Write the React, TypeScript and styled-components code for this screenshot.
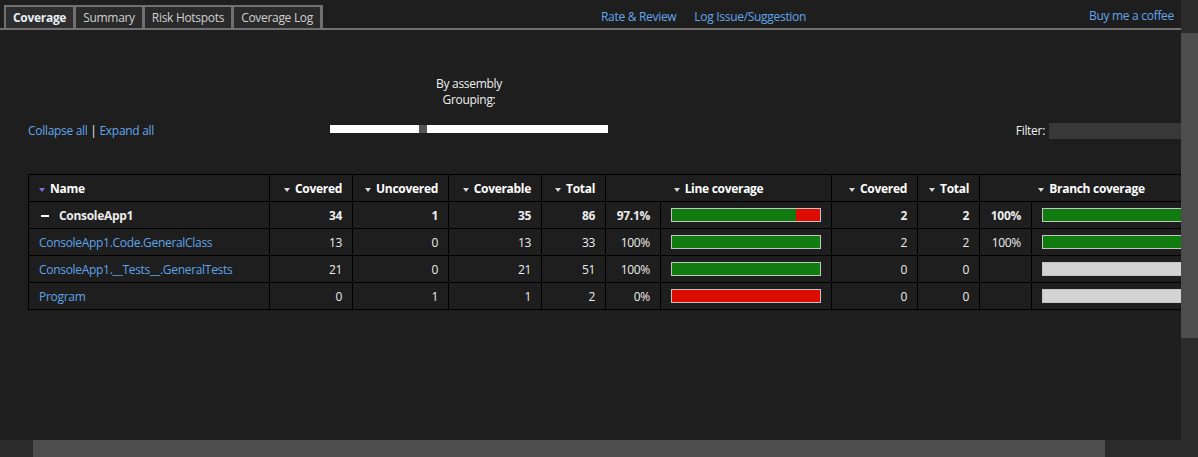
import React from 'react';
import styled, { createGlobalStyle } from 'styled-components';

const Global = createGlobalStyle`
  html, body { margin: 0; padding: 0; background: #1e1e1e; }
  body {
    font-family: "Open Sans", "Noto Sans", sans-serif;
    font-size: 12px;
    letter-spacing: -0.3px;
    color: #e6e6e6;
    overflow: hidden;
  }
`;

const Frame = styled.div`
  display: grid;
  grid-template-columns: 1181px 17px;
  grid-template-rows: 440px 17px;
  width: 1198px;
  height: 457px;
`;

const Viewport = styled.div`
  overflow: hidden;
  background: #1e1e1e;
`;

const Page = styled.div`
  width: 1240px;
`;

const Header = styled.header`
  display: flex;
  align-items: flex-end;
  box-sizing: border-box;
  width: 1181px;
  height: 30px;
  padding-left: 4px;
  border-bottom: 2px solid #707070;
`;

const TabBar = styled.nav`
  display: flex;
  align-items: flex-end;
`;

const Tab = styled.div<{ $active?: boolean }>`
  height: 21px;
  line-height: 21px;
  padding: 0 7px;
  border-top: 2px solid #707070;
  border-left: 2px solid #707070;
  border-right: 1px solid #707070;
  background: ${(p) => (p.$active ? '#2e2e2e' : '#2a2a2a')};
  color: ${(p) => (p.$active ? '#e8eef5' : '#d0d0d0')};
  font-weight: ${(p) => (p.$active ? 700 : 400)};
  white-space: nowrap;
  &:last-child { border-right-width: 3px; }
`;

const Links = styled.div`
  display: flex;
  align-items: center;
  gap: 18px;
  height: 28px;
  padding-top: 4px;
  box-sizing: border-box;
  align-self: flex-start;
  margin-left: 278px;
`;

const HeaderLink = styled.a`
  color: #62a6ec;
  text-decoration: none;
  white-space: nowrap;
`;

const Coffee = styled(HeaderLink)`
  margin-left: auto;
  margin-right: 7px;
  align-self: flex-start;
  line-height: 28px;
  padding-top: 2px;
`;

const Main = styled.main`
  padding: 46px 0 0 28px;
`;

const Controls = styled.div`
  display: grid;
  grid-template-columns: 302px 278px 1fr;
  align-items: end;
  width: 1175px;
`;

const Toggles = styled.div`
  line-height: 16px;
  color: #f0f0f0;
`;

const TextLink = styled.a`
  color: #62a6ec;
  text-decoration: none;
`;

const Grouping = styled.div`
  display: flex;
  flex-direction: column;
  align-items: center;
  padding-bottom: 6px;
  line-height: 16px;
  color: #f0f0f0;
`;

const Slider = styled.div`
  display: flex;
  align-self: stretch;
  height: 8px;
  margin-top: 17px;
`;

const SliderTrack = styled.div<{ $grow?: boolean; $w?: number }>`
  background: #ffffff;
  ${(p) => (p.$grow ? 'flex: 1;' : `width: ${p.$w}px;`)}
`;

const SliderThumb = styled.div`
  width: 8px;
  background: #555555;
`;

const FilterBox = styled.label`
  display: flex;
  justify-content: flex-end;
  align-items: center;
  gap: 4px;
  color: #f0f0f0;
`;

const FilterInput = styled.input`
  width: 154px;
  height: 16px;
  box-sizing: border-box;
  border: none;
  background: #383838;
  color: #fff;
  padding: 0 4px;
  font: inherit;
  outline: none;
`;

const Table = styled.table`
  margin-top: 35px;
  border-collapse: collapse;
  table-layout: fixed;
  width: 1175px;
  border: 1px solid #000;
`;

const Th = styled.th<{ $align?: string }>`
  height: 26px;
  padding: 0 10px;
  border: 1px solid #000;
  font-weight: 700;
  color: #ffffff;
  text-align: ${(p) => p.$align || 'right'};
  white-space: nowrap;
`;

const Td = styled.td<{ $align?: string; $bold?: boolean; $link?: boolean }>`
  height: 26px;
  padding: 0 10px;
  border: 1px solid #000;
  text-align: ${(p) => p.$align || 'right'};
  font-weight: ${(p) => (p.$bold ? 700 : 400)};
  color: ${(p) => (p.$link ? '#5ea4ea' : '#ececec')};
  white-space: nowrap;
`;

const SortArrow = styled.span<{ $active?: boolean }>`
  display: inline-block;
  width: 0;
  height: 0;
  border-left: 3px solid transparent;
  border-right: 3px solid transparent;
  border-top: 4px solid ${(p) => (p.$active ? '#7d6ee6' : '#d8d8d8')};
  margin-right: 5px;
  vertical-align: middle;
  position: relative;
  top: 1px;
`;

const Minus = styled.span`
  display: inline-block;
  width: 8px;
  height: 2px;
  background: #ffffff;
  margin: 0 10px 0 2px;
  vertical-align: middle;
`;

const Bar = styled.div<{ $empty?: boolean }>`
  display: flex;
  box-sizing: border-box;
  width: 150px;
  height: 14px;
  border: 1px solid #c4c4c4;
  background: ${(p) => (p.$empty ? '#d3d3d3' : '#dd0c00')};
`;

const BarFill = styled.div`
  background: #107c10;
  height: 100%;
`;

const VScroll = styled.div`
  background: #2b2b2b;
`;

const VThumb = styled.div`
  margin-top: 33px;
  height: 305px;
  background: #4d4d4d;
`;

const HScroll = styled.div`
  background: #2b2b2b;
  display: flex;
`;

const HThumb = styled.div`
  margin-left: 33px;
  width: 1072px;
  background: #4d4d4d;
`;

const Corner = styled.div`
  background: #2b2b2b;
`;

type Row = {
  name: string;
  covered: number;
  uncovered: number;
  coverable: number;
  total: number;
  pct: string;
  fill: number;
  bCovered: number;
  bTotal: number;
  bPct: string;
  bFill: number | null;
  assembly?: boolean;
};

const rows: Row[] = [
  { name: 'ConsoleApp1', covered: 34, uncovered: 1, coverable: 35, total: 86, pct: '97.1%', fill: 83.5, bCovered: 2, bTotal: 2, bPct: '100%', bFill: 100, assembly: true },
  { name: 'ConsoleApp1.Code.GeneralClass', covered: 13, uncovered: 0, coverable: 13, total: 33, pct: '100%', fill: 100, bCovered: 2, bTotal: 2, bPct: '100%', bFill: 100 },
  { name: 'ConsoleApp1.__Tests__.GeneralTests', covered: 21, uncovered: 0, coverable: 21, total: 51, pct: '100%', fill: 100, bCovered: 0, bTotal: 0, bPct: '', bFill: null },
  { name: 'Program', covered: 0, uncovered: 1, coverable: 1, total: 2, pct: '0%', fill: 0, bCovered: 0, bTotal: 0, bPct: '', bFill: null },
];

const colWidths = [241, 83, 96, 93, 64, 55, 171, 86, 62, 52, 172];

export default function App() {
  return (
    <>
      <Global />
      <Frame>
        <Viewport>
          <Page>
            <Header>
              <TabBar>
                <Tab $active>Coverage</Tab>
                <Tab>Summary</Tab>
                <Tab>Risk Hotspots</Tab>
                <Tab>Coverage Log</Tab>
              </TabBar>
              <Links>
                <HeaderLink href="#">Rate &amp; Review</HeaderLink>
                <HeaderLink href="#">Log Issue/Suggestion</HeaderLink>
              </Links>
              <Coffee href="#">Buy me a coffee</Coffee>
            </Header>
            <Main>
              <Controls>
                <Toggles>
                  <TextLink href="#">Collapse all</TextLink> | <TextLink href="#">Expand all</TextLink>
                </Toggles>
                <Grouping>
                  <span>By assembly</span>
                  <span>Grouping:</span>
                  <Slider>
                    <SliderTrack $w={89} />
                    <SliderThumb />
                    <SliderTrack $grow />
                  </Slider>
                </Grouping>
                <FilterBox>
                  Filter:
                  <FilterInput type="text" />
                </FilterBox>
              </Controls>
              <Table>
                <colgroup>
                  {colWidths.map((w, i) => (
                    <col key={i} style={{ width: w }} />
                  ))}
                </colgroup>
                <thead>
                  <tr>
                    <Th $align="left"><SortArrow $active />Name</Th>
                    <Th><SortArrow />Covered</Th>
                    <Th><SortArrow />Uncovered</Th>
                    <Th><SortArrow />Coverable</Th>
                    <Th><SortArrow />Total</Th>
                    <Th $align="center" colSpan={2}><SortArrow />Line coverage</Th>
                    <Th><SortArrow />Covered</Th>
                    <Th><SortArrow />Total</Th>
                    <Th $align="center" colSpan={2}><SortArrow />Branch coverage</Th>
                  </tr>
                </thead>
                <tbody>
                  {rows.map((r) => (
                    <tr key={r.name}>
                      <Td $align="left" $bold={r.assembly} $link={!r.assembly}>
                        {r.assembly && <Minus />}
                        {r.name}
                      </Td>
                      <Td $bold={r.assembly}>{r.covered}</Td>
                      <Td $bold={r.assembly}>{r.uncovered}</Td>
                      <Td $bold={r.assembly}>{r.coverable}</Td>
                      <Td $bold={r.assembly}>{r.total}</Td>
                      <Td $bold={r.assembly}>{r.pct}</Td>
                      <Td $align="left">
                        <Bar>
                          <BarFill style={{ width: `${r.fill}%` }} />
                        </Bar>
                      </Td>
                      <Td $bold={r.assembly}>{r.bCovered}</Td>
                      <Td $bold={r.assembly}>{r.bTotal}</Td>
                      <Td $bold={r.assembly}>{r.bPct}</Td>
                      <Td $align="left">
                        <Bar $empty={r.bFill === null}>
                          {r.bFill !== null && <BarFill style={{ width: `${r.bFill}%` }} />}
                        </Bar>
                      </Td>
                    </tr>
                  ))}
                </tbody>
              </Table>
            </Main>
          </Page>
        </Viewport>
        <VScroll>
          <VThumb />
        </VScroll>
        <HScroll>
          <HThumb />
        </HScroll>
        <Corner />
      </Frame>
    </>
  );
}
